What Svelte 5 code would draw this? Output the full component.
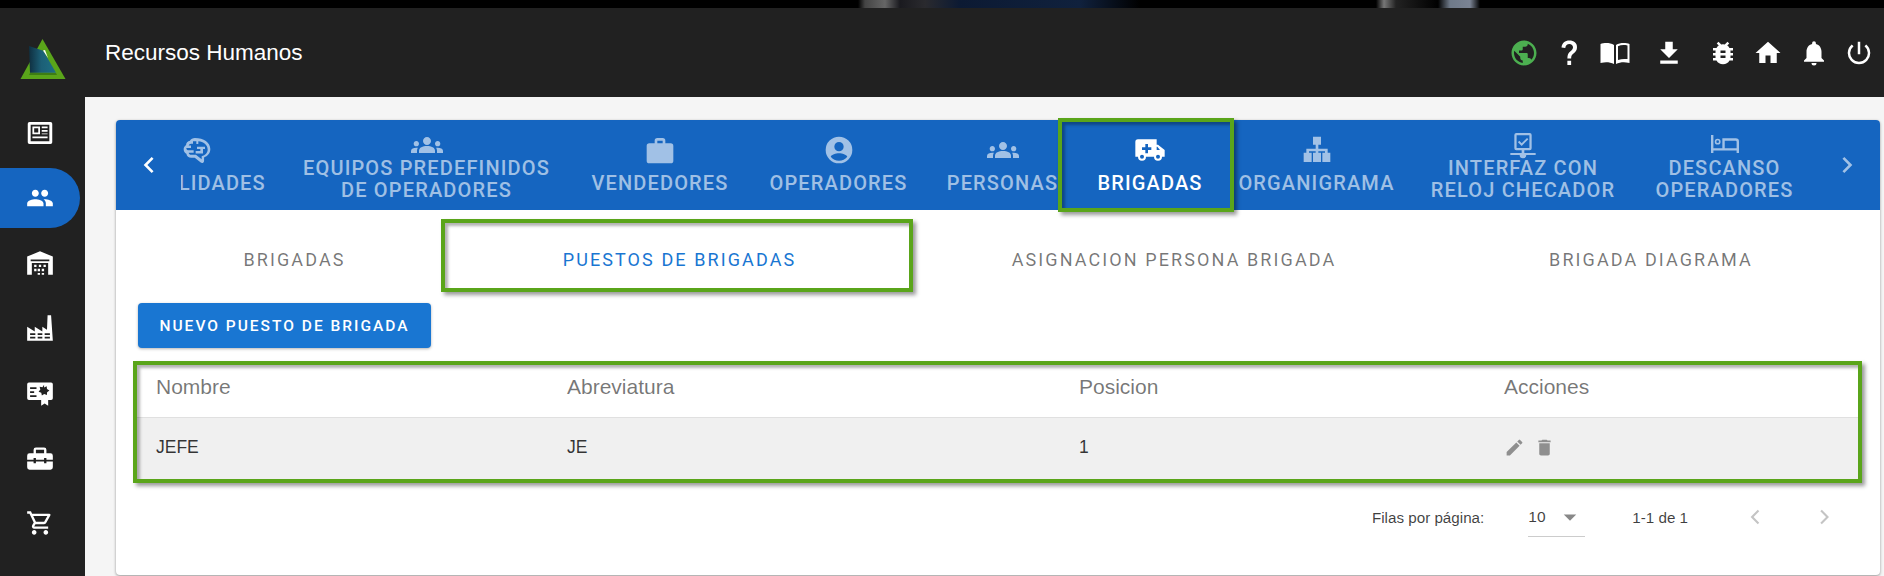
<script>
	const sideIcons = [
		'M3 2.500h18a1.500 1.500 0 0 1 1.500 1.500v16a1.500 1.500 0 0 1-1.500 1.500H3A1.500 1.500 0 0 1 1.500 20V4A1.500 1.500 0 0 1 3 2.500zM4 5v14h16V5zm1.500 1.500H12V13H5.500zM7 8v3.500h3.500V8zm6.500-1.500h5V8h-5zm0 3h5V11h-5zm0 3h5V13h-5zm-8 2.500h13v1.500h-13z',
		'M16 11c1.660 0 2.990-1.340 2.990-3S17.660 5 16 5s-3 1.340-3 3 1.340 3 3 3zm-8 0c1.660 0 2.990-1.340 2.990-3S9.660 5 8 5 5 6.340 5 8s1.340 3 3 3zm0 2c-2.330 0-7 1.170-7 3.500V19h14v-2.500c0-2.330-4.670-3.500-7-3.500zm8 0c-.290 0-.620.020-.970.050 1.160.840 1.970 1.970 1.970 3.450V19h6v-2.500c0-2.330-4.670-3.500-7-3.500z',
		'M12 2 1 6.500V22h22V6.500zM4 9h16v1.500H4zM5 12h14v10H5zM7 13.500h2v2H7zm4 0h2v2h-2zm4 0h2v2h-2zM10 17h2v2h-2zm3.500 0h2v2h-2zM7 17h2v2H7zm3 3.500h2V22h-2zm3.500 0h2V22h-2z',
		'M18.500 1h3L23 23H1V11l6.500 4v-4l6.500 4v-4l4 2.500zM3.500 16.500V18h4.500v-1.500zm6.500 0V18h4v-1.500zm6 0V18h4.500v-1.500zM3.500 19.500V21h4.500v-1.500zm6.500 0V21h4v-1.500zm6 0V21h4.500v-1.500z',
		'M2.500 3h19A1.500 1.500 0 0 1 23 4.500v12a1.500 1.500 0 0 1-1.500 1.500H19v5l-3-2-3 2v-5H2.500A1.500 1.500 0 0 1 1 16.500v-12A1.500 1.500 0 0 1 2.500 3zM3.500 7v1.500H9V7zm0 3.500V12H7v-1.500zm0 3.500v1.500H9V14zM15.500 5l-1.400 2-2.400-.3.600 2.400-1.500 1.900 2.300.8.500 2.400 2-1.400 2.300.9.200-2.400 2-1.500-2.100-1.200-.300-2.400-2.200 1z',
		'M8.500 3h7A2 2 0 0 1 17.500 5v3H21a2 2 0 0 1 2 2v3.500h-5.500v-1.500h-2v1.500h-7v-1.500h-2v1.500H1V10a2 2 0 0 1 2-2h3.500V5a2 2 0 0 1 2-2zm0 5h7V5h-7zM1 15h5.500v1.500h2V15h7v1.500h2V15H23v5a2 2 0 0 1-2 2H3a2 2 0 0 1-2-2z',
		'M15.550 13c.750 0 1.410-.410 1.750-1.030l3.580-6.490A.996.996 0 0 0 20.010 4H5.210l-.940-2H1v2h2l3.600 7.590-1.350 2.440C4.520 15.370 5.480 17 7 17h12v-2H7l1.100-2h7.450zM6.160 6h12.150l-2.760 5H8.530L6.160 6zM7 18c-1.100 0-1.990.9-1.990 2S5.900 22 7 22s2-.9 2-2-.9-2-2-2zm10 0c-1.100 0-1.990.9-1.990 2s.890 2 1.990 2 2-.9 2-2-.9-2-2-2z'
	];

	const people = 'M12 12.750c1.630 0 3.070.390 4.240.900 1.080.480 1.760 1.560 1.760 2.730V18H6v-1.610c0-1.180.680-2.260 1.760-2.730 1.170-.520 2.610-.910 4.240-.910zM4 13c1.100 0 2-.9 2-2s-.9-2-2-2-2 .9-2 2 .9 2 2 2zm1.130 1.100c-.370-.060-.740-.100-1.130-.100-.990 0-1.930.210-2.780.580A2.010 2.010 0 0 0 0 16.430V18h4.500v-1.610c0-.830.230-1.610.630-2.290zM20 13c1.100 0 2-.9 2-2s-.9-2-2-2-2 .9-2 2 .9 2 2 2zm4 3.430c0-.810-.480-1.530-1.220-1.850A6.950 6.950 0 0 0 20 14c-.390 0-.760.040-1.130.100.400.680.630 1.460.630 2.290V18H24v-1.570zM12 6c1.660 0 3 1.340 3 3s-1.340 3-3 3-3-1.340-3-3 1.340-3 3-3z';

	const tabs = [
		{ label: ['HABILIDADES'], w: 172, icon: 'M10.500 3C8.800 3 7.400 3.700 6.700 5 5 5.300 3.800 6.600 3.800 8.200 2.600 9 2 10.100 2 11.500c0 1.500.8 2.700 2 3.300.3 1.800 1.800 3 3.600 3h2.700l4.500 3.600c1 .8 2.500.1 2.500-1.200v-2.600c2.600-.9 4.700-3.200 4.700-6.300C22 6.300 17 3 10.500 3zM9 5.500h2.500v2H13V5.500c3.800.3 7 2.600 7 6.200 0 2.400-1.700 4.300-4.500 5v2.300l-4.300-3.400H7.600c-.9 0-1.700-.6-1.800-1.600h3.700v-1.800H5.200C4.500 11.900 4 11.300 4 10.500h3.500V8.700H5.800c.2-.9 1-1.500 2-1.400h1.200zM12 9.500v1.800h2.500v1.500H11v1.800h5.500v-3.300h1.500V9.500z' },
		{ label: ['EQUIPOS PREDEFINIDOS', 'DE OPERADORES'], w: 287, icon: people },
		{ label: ['VENDEDORES'], w: 180, icon: 'M10 3h4a2 2 0 0 1 2 2v2h4a2 2 0 0 1 2 2v11a2 2 0 0 1-2 2H4a2 2 0 0 1-2-2V9a2 2 0 0 1 2-2h4V5a2 2 0 0 1 2-2zm0 4h4V5h-4z' },
		{ label: ['OPERADORES'], w: 177, icon: 'M12 2a10 10 0 1 0 0 20 10 10 0 0 0 0-20zm0 4a3.500 3.500 0 1 1 0 7 3.500 3.500 0 0 1 0-7zm0 14a8 8 0 0 1-6.200-3c.8-1.500 3.600-2.500 6.200-2.500s5.400 1 6.200 2.500A8 8 0 0 1 12 20z' },
		{ label: ['PERSONAS'], w: 151, icon: people },
		{ label: ['BRIGADAS'], w: 144, active: true, icon: 'M18 8h-1V4H3a2 2 0 0 0-2 2v11h2a3 3 0 0 0 6 0h6a3 3 0 0 0 6 0h2v-5zM6 18.500a1.500 1.500 0 1 1 0-3 1.500 1.500 0 0 1 0 3zM13 12h-2.500v2.500h-2V12H6v-2h2.500V7.500h2V10H13zm5 6.500a1.500 1.500 0 1 1 0-3 1.500 1.500 0 0 1 0 3zM17 12V9.500h.5l2 2.500z' },
		{ label: ['ORGANIGRAMA'], w: 189, icon: 'M9 2h6v6h-2v3h7v3h2v7h-6v-7h2v-1h-5v1h2v7H9v-7h2v-1H6v1h2v7H2v-7h2v-3h7V8H9z' },
		{ label: ['INTERFAZ CON', 'RELOJ CHECADOR'], w: 224, icon: 'M7 3h10a1.500 1.500 0 0 1 1.500 1.500v10A1.500 1.500 0 0 1 17 16h-4v2h8.500v1.500h-7a2.500 2.500 0 0 1-5 0h-7V18H11v-2H7a1.500 1.500 0 0 1-1.500-1.500v-10A1.500 1.500 0 0 1 7 3zm.2 1.700v9.600h9.600V4.700zM15 6.700l1 1-5 5-2.800-2.800 1-1 1.800 1.800z' },
		{ label: ['DESCANSO', 'OPERADORES'], w: 179, icon: 'M1.500 4.500h1.800v10H10V7h10a2.500 2.500 0 0 1 2.500 2.500V18h-1.800v-1.800H3.300V18H1.500zm10.300 4.300v5.700h8.900V9.500a.7.7 0 0 0-.7-.7zM6.500 7.300a2.200 2.200 0 1 1 0 4.400 2.200 2.200 0 0 1 0-4.400zm0 1.200a1 1 0 1 0 0 2 1 1 0 0 0 0-2z' }
	];

	const subTabs = ['BRIGADAS', 'PUESTOS DE BRIGADAS', 'ASIGNACION PERSONA BRIGADA', 'BRIGADA DIAGRAMA'];
</script>

<div class="top-strip"></div>
<div class="shell">
	<header class="appbar">
		<div class="logo">
			<svg viewBox="0 0 46 42" width="46" height="42">
				<defs>
					<linearGradient id="logo-fill" x1="0" y1="0" x2="1" y2="0">
						<stop offset="0" stop-color="#0f2f40" />
						<stop offset="0.45" stop-color="#1c5f76" />
						<stop offset="1" stop-color="#1e6f84" />
					</linearGradient>
				</defs>
				<path d="M22.500 1 45.500 41H.5z" fill="#5aa51a" />
				<path d="M10 35h26l1 2H9z" fill="#3e7d14" />
				<path d="M9 8 23.300 12.700 36 34.700H10z" fill="url(#logo-fill)" />
				<path d="M23 12.500 25 12l3 8z" fill="#fff" />
			</svg>
		</div>
		<h1>Recursos Humanos</h1>
		<div class="actions">
			<svg class="globe" viewBox="0 0 24 24"><path d="M12 2C6.480 2 2 6.480 2 12s4.480 10 10 10 10-4.480 10-10S17.520 2 12 2zm-1 17.930c-3.950-.490-7-3.850-7-7.930 0-.620.080-1.210.210-1.790L9 15v1c0 1.100.9 2 2 2v1.930zm6.900-2.540c-.260-.810-1-1.390-1.900-1.390h-1v-3c0-.550-.450-1-1-1H8v-2h2c.550 0 1-.450 1-1V7h2c1.100 0 2-.9 2-2v-.410c2.930 1.190 5 4.060 5 7.410 0 2.080-.8 3.970-2.100 5.390z" /></svg>
			<svg viewBox="0 0 24 24"><path d="M10.700 18.200h3v3.300h-3zM12.300 2C8.800 2 6.400 4 6 7.500l3 .4C9.300 5.800 10.500 4.800 12.300 4.800c1.700 0 2.900 1 2.900 2.600 0 1.200-.6 2-2 3.100-1.700 1.300-2.500 2.700-2.500 5.800h3c0-2.300.5-2.900 1.900-4 1.800-1.400 2.800-2.800 2.800-5C18.400 3.900 15.900 2 12.300 2z" /></svg>
			<svg class="book" viewBox="0 0 30 24"><path fill-rule="evenodd" d="M.5 3C4 1.800 10 1.500 14 4v19c-3.500-2-9-2.200-12-1.300L.5 22zM16 4c4-2.500 10-2.200 13.500-1v19l-1.500-.3c-3-.9-8.500-.7-12 1.300zm2 1.200v13.700c3-1 6-1.200 9.500-.8V4.500c-3.500-.8-6.800-.6-9.500.7z" /></svg>
			<svg class="wide" viewBox="0 0 24 24"><path d="M19 9h-4V3H9v6H5l7 7zM5 18v2.500h14V18z" /></svg>
			<svg class="bug" viewBox="0 0 24 24"><path fill-rule="evenodd" d="M20 8h-2.800a6 6 0 0 0-1.800-2l1.600-1.600L15.600 3l-2.200 2.200a6 6 0 0 0-2.800 0L8.400 3 7 4.400 8.600 6a6 6 0 0 0-1.800 2H4v2h2.100c0 .3-.1.700-.1 1v1H4v2h2v1c0 .3 0 .7.1 1H4v2h2.800a6 6 0 0 0 10.400 0H20v-2h-2.100c.1-.3.1-.7.1-1v-1h2v-2h-2v-1c0-.3 0-.7-.1-1H20zm-6 8h-4v-2h4zm0-4h-4v-2h4z" /></svg>
			<svg viewBox="0 0 24 24"><path d="M10 20v-6h4v6h5v-8h3L12 3 2 12h3v8z" /></svg>
			<svg viewBox="0 0 24 24"><path d="M12 22a2 2 0 0 0 2-2h-4a2 2 0 0 0 2 2zm6-6v-5c0-3.100-1.600-5.600-4.500-6.300V4a1.500 1.500 0 0 0-3 0v.7C7.600 5.400 6 7.900 6 11v5l-2 2v1h16v-1z" /></svg>
			<svg viewBox="0 0 24 24"><path d="M13 3h-2v10h2zm4.800 2.200-1.400 1.400A7 7 0 1 1 7.600 6.600L6.200 5.200a9 9 0 1 0 11.600 0z" /></svg>
		</div>
	</header>

	<div class="body">
		<nav class="sidebar">
			{#each sideIcons as d, i}
				<div class="side-item" class:current={i === 1}>
					<svg viewBox="0 0 24 24" width="28" height="28"><path fill-rule="evenodd" {d} /></svg>
				</div>
			{/each}
		</nav>

		<main class="content">
			<section class="card">
				<div class="tabs">
					<button class="arrow left" aria-label="anterior">
						<svg viewBox="0 0 24 24" width="32" height="32"><path d="M15.400 7.400 14 6l-6 6 6 6 1.400-1.400L10.800 12z" /></svg>
					</button>
					<div class="tab-track">
						{#each tabs as t}
							<div class="tab" class:active={t.active} class:two={t.label.length > 1} style="width:{t.w}px">
								<svg viewBox="0 0 24 24" width="32" height="32"><path fill-rule="evenodd" d={t.icon} /></svg>
								{#each t.label as line}<span class="line">{line}</span>{/each}
							</div>
						{/each}
					</div>
					<button class="arrow right" aria-label="siguiente">
						<svg viewBox="0 0 24 24" width="32" height="32"><path d="M10 6 8.600 7.400 13.200 12l-4.600 4.600L10 18l6-6z" /></svg>
					</button>
					<div class="mark tab-mark"></div>
				</div>

				<div class="subtabs">
					{#each subTabs as s, i}
						<div class="subtab" class:selected={i === 1}>{s}</div>
					{/each}
				</div>
				<div class="mark subtab-mark"></div>

				<div class="toolbar">
					<button class="primary">NUEVO PUESTO DE BRIGADA</button>
				</div>

				<div class="table">
					<div class="row head">
						<div>Nombre</div>
						<div>Abreviatura</div>
						<div>Posicion</div>
						<div>Acciones</div>
					</div>
					<div class="row data">
						<div>JEFE</div>
						<div>JE</div>
						<div>1</div>
						<div class="row-actions">
							<svg viewBox="0 0 24 24" width="21" height="21"><path d="M3 17.250V21h3.750L17.810 9.940l-3.750-3.750L3 17.250zM20.710 7.040a1 1 0 0 0 0-1.410l-2.340-2.340a1 1 0 0 0-1.410 0l-1.830 1.830 3.750 3.750 1.830-1.830z" /></svg>
							<svg viewBox="0 0 24 24" width="21" height="21"><path d="M6 19c0 1.100.9 2 2 2h8c1.100 0 2-.9 2-2V7H6v12zM19 4h-3.500l-1-1h-5l-1 1H5v2h14V4z" /></svg>
						</div>
					</div>
				</div>

				<div class="pager">
					<span class="rows-label">Filas por página:</span>
					<div class="select">
						<span>10</span>
						<svg viewBox="0 0 24 24" width="30" height="30"><path d="M7 10l5 5 5-5z" /></svg>
					</div>
					<span class="count">1-1 de 1</span>
					<svg class="page-arrow" viewBox="0 0 24 24" width="28" height="28"><path d="M15 6.500 9.500 12l5.500 5.500" /></svg>
					<svg class="page-arrow" viewBox="0 0 24 24" width="28" height="28"><path d="M9.500 6.500 15 12l-5.500 5.500" /></svg>
				</div>
			</section>
		</main>
	</div>
</div>

<style>
	:global(body) {
		margin: 0;
		background: #f5f5f5;
		font-family: Roboto, 'Liberation Sans', sans-serif;
		overflow: hidden;
	}
	.top-strip {
		height: 8px;
		background: linear-gradient(
			90deg,
			#000 858px,
			#444 865px,
			#666 885px,
			#1a1a1f 900px,
			#2a2a2e 925px,
			#0c1a33 960px,
			#10213d 1080px,
			#000 1140px,
			#000 1376px,
			#777 1384px,
			#222 1396px,
			#000 1438px,
			#6f7a89 1450px,
			#7a8393 1470px,
			#000 1480px
		);
	}
	.shell {
		height: 568px;
		overflow: hidden;
		display: flex;
		flex-direction: column;
	}
	.appbar {
		height: 89px;
		flex: none;
		background: #212121;
		display: flex;
		align-items: center;
		color: #fff;
	}
	.logo {
		width: 85px;
		flex: none;
		padding: 13px 0 0 20px;
		box-sizing: border-box;
		line-height: 0;
	}
	h1 {
		margin: 0 0 0 20px;
		font: 400 22.500px 'Liberation Sans', Arial, sans-serif;
	}
	.actions {
		margin-left: auto;
		display: flex;
		align-items: center;
		gap: 15.500px;
		padding-right: 10px;
	}
	.actions svg {
		width: 30px;
		height: 30px;
		fill: #fff;
	}
	.actions .globe {
		fill: #4caf50;
	}
	.actions .book {
		height: 24px;
	}
	.actions .wide {
		margin-left: 9px;
	}
	.actions .bug {
		margin-left: 8px;
	}
	.body {
		flex: 1;
		display: flex;
		min-height: 0;
	}
	.sidebar {
		width: 85px;
		flex: none;
		background: #212121;
		display: flex;
		flex-direction: column;
		padding-top: 6px;
		gap: 5px;
		box-sizing: border-box;
	}
	.side-item {
		width: 80px;
		height: 60px;
		flex: none;
		display: flex;
		align-items: center;
		justify-content: center;
		border-radius: 0 30px 30px 0;
	}
	.side-item svg {
		fill: #fff;
	}
	.side-item.current {
		background: #1565c0;
	}
	.content {
		flex: 1;
		min-width: 0;
		padding: 23px 4px 0 31px;
	}
	.card {
		position: relative;
		background: #fff;
		border-radius: 4px;
		box-shadow: 0 1px 3px rgba(0, 0, 0, 0.4);
		height: 455px;
	}
	.tabs {
		position: relative;
		height: 90px;
		background: #1565c0;
		border-radius: 4px 4px 0 0;
		display: flex;
		align-items: stretch;
	}
	button {
		font-family: inherit;
		border: none;
		padding: 0;
		background: none;
	}
	.arrow {
		flex: none;
		display: flex;
		align-items: center;
		justify-content: center;
	}
	.arrow svg {
		fill: #fff;
	}
	.arrow.right svg {
		fill: rgba(255, 255, 255, 0.6);
	}
	.arrow.left {
		width: 65px;
	}
	.arrow.right {
		flex: 1;
	}
	.tab-track {
		display: flex;
		width: 1633px;
		flex: none;
		overflow: hidden;
	}
	.tab {
		display: flex;
		flex-direction: column;
		align-items: center;
		justify-content: center;
		flex: none;
		padding-bottom: 2px;
		box-sizing: border-box;
		color: rgba(255, 255, 255, 0.6);
		font-size: 20px;
		font-weight: 500;
		letter-spacing: 1.150px;
		line-height: 22px;
		text-align: center;
	}
	.tab:first-child {
		margin-left: -70px;
	}
	.tab svg {
		fill: currentColor;
		margin-bottom: 6px;
	}
	.tab.two {
		padding-bottom: 0;
	}
	.tab.two svg {
		margin-bottom: -4px;
	}
	.tab.active {
		color: #fff;
	}
	.line {
		display: block;
		white-space: nowrap;
	}
	.mark {
		position: absolute;
		box-sizing: border-box;
		border: 4px solid #5aa51a;
		box-shadow:
			3px 3px 4px rgba(0, 0, 0, 0.4),
			inset 3px 3px 3px rgba(0, 0, 0, 0.3);
		pointer-events: none;
	}
	.tab-mark {
		left: 942px;
		top: -2px;
		width: 176px;
		height: 94px;
	}
	.subtab-mark {
		left: 325px;
		top: 99px;
		width: 472px;
		height: 73px;
	}
	.subtabs {
		display: grid;
		grid-template-columns: 357px 413px 576px 378px;
		height: 72px;
		margin-top: 13px;
	}
	.subtab {
		display: flex;
		align-items: center;
		justify-content: center;
		color: rgba(0, 0, 0, 0.54);
		font-size: 18px;
		letter-spacing: 2.100px;
	}
	.subtab.selected {
		color: #1976d2;
	}
	.toolbar {
		padding: 8px 0 0 22px;
		line-height: 0;
	}
	.primary {
		width: 293px;
		height: 45px;
		background: #1976d2;
		color: #fff;
		border-radius: 4px;
		font-size: 15.500px;
		font-weight: 500;
		letter-spacing: 2px;
		box-shadow: 0 1px 3px rgba(0, 0, 0, 0.3);
	}
	.table {
		position: relative;
		margin: 13px 18px 0 17px;
		border: 4px solid #5aa51a;
		box-shadow: 3px 3px 4px rgba(0, 0, 0, 0.4);
	}
	.table::after {
		content: '';
		position: absolute;
		inset: 0;
		box-shadow: inset 3px 3px 3px rgba(0, 0, 0, 0.3);
		pointer-events: none;
	}
	.row {
		display: grid;
		grid-template-columns: 411px 512px 425px 1fr;
		padding-left: 19px;
		align-items: center;
	}
	.head {
		height: 53px;
		box-sizing: border-box;
		padding-bottom: 9px;
		color: rgba(0, 0, 0, 0.54);
		font: 400 21px 'Liberation Sans', Arial, sans-serif;
		border-bottom: 1px solid #e0e0e0;
	}
	.data {
		height: 61px;
		box-sizing: border-box;
		padding-bottom: 2px;
		background: #f0f0f0;
		color: rgba(0, 0, 0, 0.8);
		font: 400 17.500px 'Liberation Sans', Arial, sans-serif;
	}
	.row-actions {
		display: flex;
		gap: 9px;
		line-height: 0;
	}
	.row-actions svg {
		fill: #8f8f8f;
	}
	.pager {
		display: flex;
		align-items: center;
		justify-content: flex-end;
		margin-top: 14px;
		padding-right: 42px;
		font: 400 15.200px 'Liberation Sans', Arial, sans-serif;
		color: rgba(0, 0, 0, 0.75);
	}
	.select {
		width: 57px;
		height: 40px;
		margin-left: 44px;
		border-bottom: 1px solid #ccc;
		display: flex;
		align-items: center;
		justify-content: space-between;
		box-sizing: border-box;
		font-size: 15.500px;
	}
	.select svg {
		fill: #888;
	}
	.count {
		margin: 0 53px 0 47px;
	}
	.page-arrow {
		fill: none;
		stroke: #c4c4c4;
		stroke-width: 1.800;
	}
	.page-arrow + .page-arrow {
		margin-left: 41px;
	}
</style>
